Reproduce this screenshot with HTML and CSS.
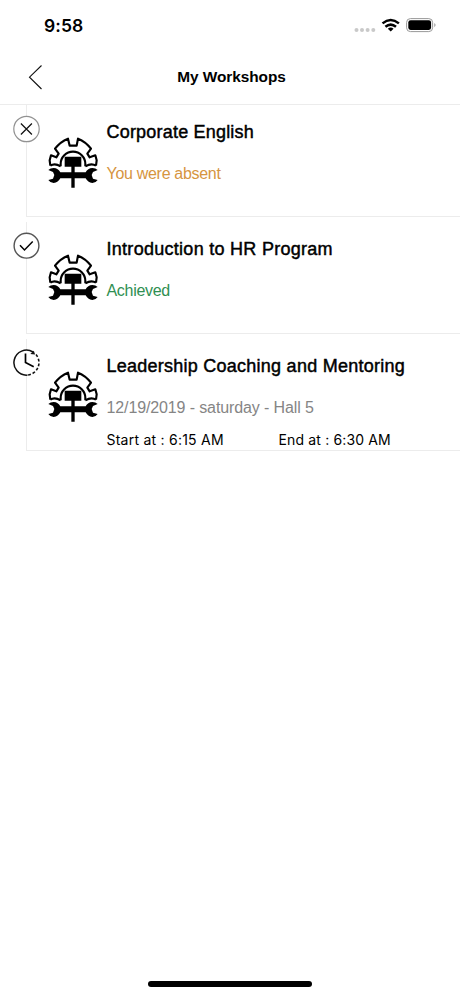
FILE: index.html
```html
<!DOCTYPE html>
<html lang="en">
<head>
<meta charset="utf-8">
<title>My Workshops</title>
<link rel="stylesheet" href="styles.css">
</head>
<body>
<svg width="0" height="0" class="defs">
  <symbol id="workshop" viewBox="25 22 150 153">
    <path d="M32 108L30 92L34 77L50 83L57 72L46 57Q62 36 85 27L90 48H111L115 27Q138 36 154 57L143 72L150 83L167 77L171 92L169 108M63 110V103A37 37 0 0 1 137 103V110M32 108Q45 99 63 110M169 108Q155 99 137 110" fill="none" stroke="#000" stroke-width="6.4" stroke-linejoin="round"/>
    <path d="M75 81H125V111H105V128H138C142 120 149 115 158 115Q168 115 174 121L160 127L156 136L160 147L174 151Q168 160 158 160C149 160 142 154 138 146H105V174H95V146H62C58 154 51 160 42 160Q32 160 26 151L40 147L44 136L40 127L26 121Q32 115 42 115C51 115 58 120 62 128H95V111H75Z"/>
  </symbol>
</svg>
<div class="screen">
  <div class="status">
    <span class="clock">9:58</span>
    <svg class="signals" width="84" height="20" viewBox="0 0 84 20">
      <g fill="#c9c9c9"><circle cx="4.5" cy="14" r="2"/><circle cx="10" cy="14" r="2"/><circle cx="15.6" cy="14" r="2"/><circle cx="21.3" cy="14" r="2"/></g>
      <g fill="none" stroke="#000" stroke-width="2.5"><path d="M30.5 7.4Q38.7 .7 46.9 7.4"/><path d="M33.4 10.8Q38.7 6.4 44 10.8"/></g>
      <path d="M35.8 12.7Q38.7 10.4 41.6 12.7L38.7 15.6Z"/>
      <rect x="54.6" y="2.6" width="26" height="13" rx="3.8" fill="none" stroke="#999"/>
      <rect x="56.3" y="4.3" width="22.8" height="9.6" rx="2.3"/>
      <path d="M82.3 7Q84.8 9.1 82.3 11.2Z" fill="#999"/>
    </svg>
  </div>
  <header class="nav">
    <svg class="back" width="16" height="26" viewBox="0 0 16 26"><path d="M13.5 1.5L1.5 13.2L13.5 25" fill="none" stroke="#111" stroke-width="1.1"/></svg>
    <h1>My Workshops</h1>
  </header>
  <main>
    <article class="row">
      <svg class="state" viewBox="-.5 0 28 28"><circle cx="14" cy="14" r="12.7" fill="#fff" stroke="#929292" stroke-width="1.2"/><path d="M8.4 8.5L19.4 19.5M19.4 8.5L8.4 19.5" stroke="#111" stroke-width="1.25"/></svg>
      <svg class="icon"><use href="#workshop"/></svg>
      <div class="info"><h2 class="t1">Corporate English</h2><p class="absent">You were absent</p></div>
    </article>
    <article class="row">
      <svg class="state" viewBox="-.5 .3 28 28"><circle cx="14" cy="14" r="12.4" fill="#fff" stroke="#555" stroke-width="1.4"/><path d="M7.5 13.6L12 18.3L20.2 9.8" fill="none" stroke="#000" stroke-width="1.5"/></svg>
      <svg class="icon"><use href="#workshop"/></svg>
      <div class="info"><h2 class="t2">Introduction to HR Program</h2><p class="achieved">Achieved</p></div>
    </article>
    <article class="row">
      <svg class="state" viewBox="-.5 .4 28 28"><circle cx="14" cy="14" r="12.6" fill="#fff"/><path d="M15 26.5A12.5 12.5 0 1 1 20.5 3.4" fill="none" stroke="#111" stroke-width="1.5"/><path d="M17.8 5.4L22.6 5.8L21.3 2.2Z" fill="#111"/><path d="M23.5 6A12.4 12.4 0 0 1 15 26.4" fill="none" stroke="#111" stroke-width="1.6" stroke-dasharray="2.8 1.9"/><path d="M13 5V14L21.2 18.2" fill="none" stroke="#000" stroke-width="1.7"/></svg>
      <svg class="icon"><use href="#workshop"/></svg>
      <div class="info"><h2 class="t3">Leadership Coaching and Mentoring</h2><p class="date">12/19/2019 - saturday - Hall 5</p>
        <div class="times"><span>Start at : 6:15 AM</span><span class="end">End at : 6:30 AM</span></div></div>
    </article>
  </main>
  <div class="home"></div>
</div>
</body>
</html>
```
FILE: styles.css
```css
* { box-sizing: border-box; }
body { margin: 0; background: #fff; color: #000; font-family: "Liberation Sans", Arial, sans-serif; }
h1, h2, p { margin: 0; }
.defs { display: block; position: absolute; }
.screen { height: 996px; display: flex; flex-direction: column; overflow: hidden; }
.status { height: 50px; padding: 16px 24px 0 44px; display: flex; justify-content: space-between; align-items: flex-start; }
.clock { font: 600 17.5px/20px Inter, sans-serif; letter-spacing: .1px; }
.nav { height: 55px; border-bottom: 1px solid #ececec; display: grid; grid-template-columns: 28px 1fr 28px; align-items: center; padding: 0 27px 0 28px; }
.back { display: block; }
.nav h1 { font-size: 15.4px; line-height: 20px; text-align: center; font-weight: 700; white-space: nowrap; padding-left: 2px; letter-spacing: -.04px; }
main { flex: 1; }
.row { height: 112px; margin: 0 0 5px 26px; border-left: 1px solid #ececec; border-bottom: 1px solid #ececec; display: flex; }
.state { flex: none; width: 28px; height: 28px; margin: 10px 0 0 -15px; display: block; }
.icon { flex: none; width: 50px; height: 51px; margin: 32px 0 0 8px; display: block; }
.info { flex: 1; padding: 16px 0 0 8.5px; white-space: nowrap; }
.info h2 { font-size: 18px; line-height: 22px; font-weight: 400; -webkit-text-stroke: .45px #000; letter-spacing: .25px; }
.info p { font-size: 16px; line-height: 20px; margin-top: 21px; letter-spacing: -.3px; }
.info .t1 { letter-spacing: .2px; }
.info .t2 { letter-spacing: .28px; }
.absent { color: #d6953f; }
.achieved { color: #2f8f52; }
.info .date { color: #858585; letter-spacing: -.12px; }
.times { display: grid; grid-template-columns: 172px 1fr; font: 400 14px/18px Inter, sans-serif; letter-spacing: .24px; margin-top: 13px; }
.end { letter-spacing: .15px; }
.home { width: 164px; height: 6px; border-radius: 3px; background: #000; margin: 0 auto 9px; }
```
